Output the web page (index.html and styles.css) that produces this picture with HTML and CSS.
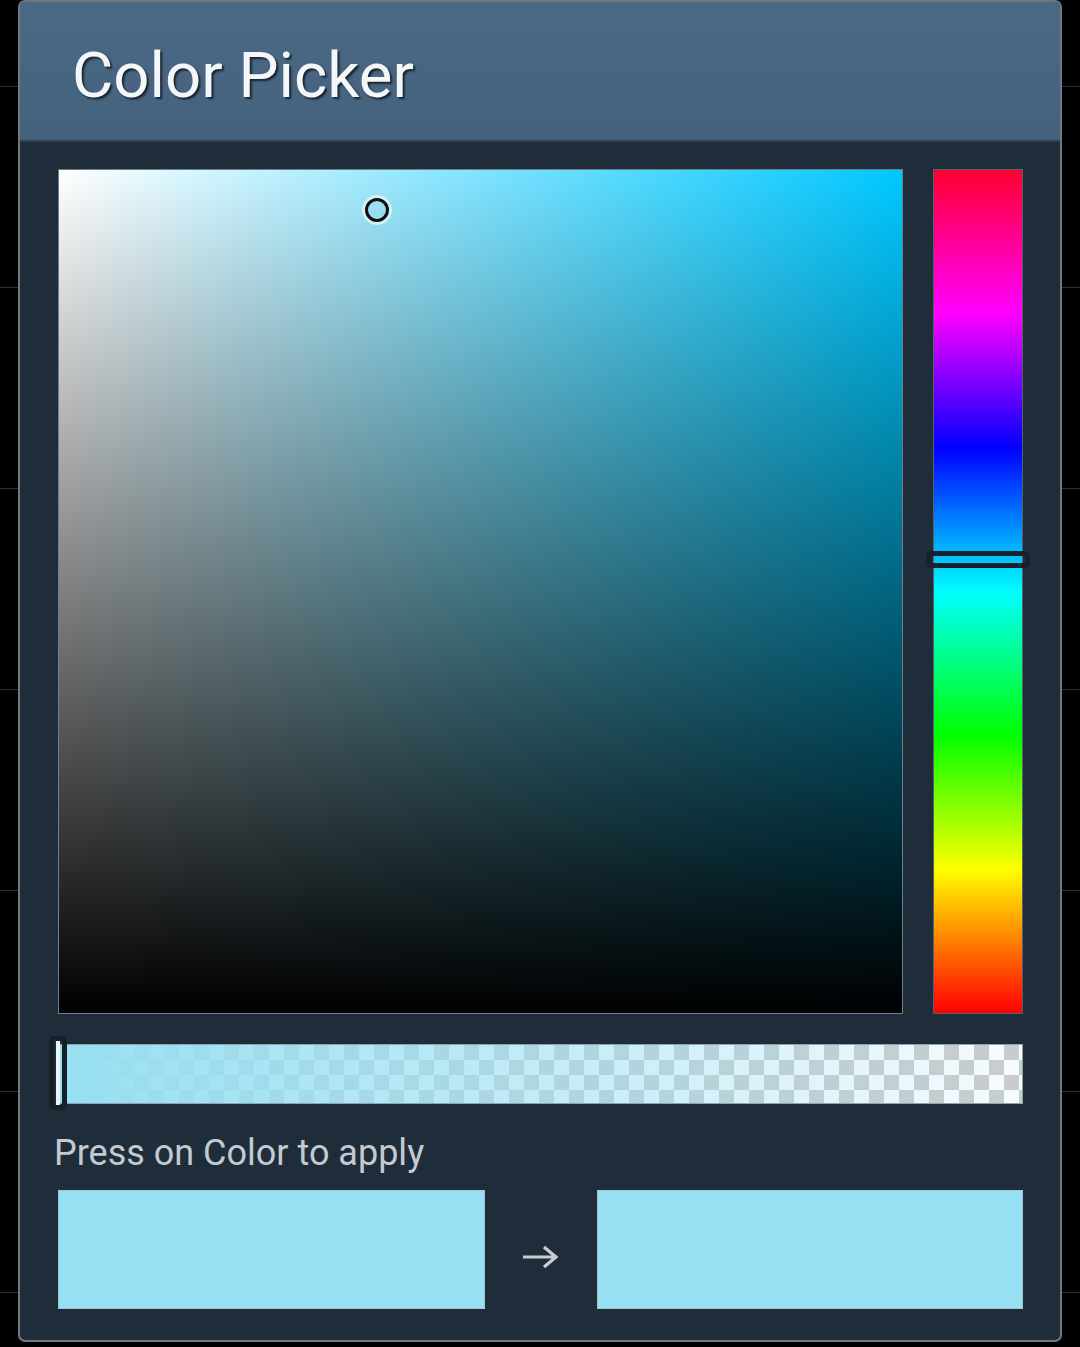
FILE: index.html
```html
<!DOCTYPE html>
<html lang="en">
<head>
    <meta charset="UTF-8">
    <meta name="viewport" content="width=device-width, initial-scale=1.0">
    <title>Color Picker</title>
    <link rel="stylesheet" href="styles.css">
</head>
<body>
    <!-- settings list behind the dialog -->
    <div class="backdrop">
        <div class="backdrop-row first"></div>
        <div class="backdrop-row"></div>
        <div class="backdrop-row"></div>
        <div class="backdrop-row"></div>
        <div class="backdrop-row"></div>
        <div class="backdrop-row"></div>
        <div class="backdrop-row"></div>
    </div>

    <div class="dialog">
        <div class="dialog-header">
            <h1 class="dialog-title">Color Picker</h1>
        </div>

        <div class="dialog-body">
            <div class="picker-row">
                <div class="sv-square">
                    <div class="sv-cursor"></div>
                </div>
                <div class="hue-bar">
                    <div class="hue-handle"></div>
                </div>
            </div>

            <div class="alpha-bar">
                <div class="alpha-handle"></div>
            </div>

            <div class="hint">Press on Color to apply</div>

            <div class="swatches">
                <div class="swatch"></div>
                <div class="swatch-arrow">
                    <svg width="38" height="26" viewBox="0 0 38 26">
                        <path d="M2 13 H34 M23 3 L35 13 L23 23" fill="none" stroke="#c9ced3" stroke-width="3.2" stroke-linejoin="miter"/>
                    </svg>
                </div>
                <div class="swatch"></div>
            </div>
        </div>
    </div>
</body>
</html>
```

FILE: styles.css
```css
body {
    margin: 0;
    padding: 0;
    background: #000;
    width: 1080px;
    height: 1347px;
    overflow: hidden;
    position: relative;
    font-family: Roboto, 'Noto Sans', sans-serif;
}

.backdrop {
    display: flex;
    flex-direction: column;
}

.backdrop-row {
    height: 200px;
    border-bottom: 1px solid #2b2f33;
}

.backdrop-row.first {
    height: 86px;
}

/* Dialog */
.dialog {
    position: absolute;
    left: 18px;
    top: 0;
    width: 1044px;
    height: 1342px;
    box-sizing: border-box;
    border: 2px solid #6f7882;
    border-radius: 7px;
    background-color: #1f2d3b;
    overflow: hidden;
    display: flex;
    flex-direction: column;
}

.dialog-header {
    height: 140px;
    box-sizing: border-box;
    padding: 42px 0 0 52px;
    background: linear-gradient(to bottom, #4a6984, #45627d);
    border-bottom: 2px solid #2f4457;
}

.dialog-title {
    margin: 0;
    font-size: 63.5px;
    line-height: 63.5px;
    font-weight: normal;
    color: #f3f7fa;
    text-shadow: 2px 2px 2px rgba(0, 0, 0, 0.65);
}

.dialog-body {
    padding: 27px 37px 0 38px;
    display: flex;
    flex-direction: column;
}

.picker-row {
    display: grid;
    grid-template-columns: 845px 90px;
    gap: 30px;
}

.sv-square {
    height: 845px;
    box-sizing: border-box;
    border: 1px solid #6f7f8c;
    position: relative;
    background:
        linear-gradient(to bottom, rgba(0, 0, 0, 0), #000),
        linear-gradient(to right, #fff, rgba(255, 255, 255, 0)),
        #00c8ff;
}

.sv-cursor {
    position: absolute;
    left: 306px;
    top: 28px;
    width: 18px;
    height: 18px;
    border: 3px solid #111;
    border-radius: 50%;
    box-shadow: 0 0 0 3px rgba(235, 245, 248, 0.75);
}

.hue-bar {
    height: 845px;
    box-sizing: border-box;
    border: 1px solid #55606a;
    position: relative;
    background: linear-gradient(to bottom, #ff0030, #ff00ff 17%, #0000ff 33%, #00ffff 50%, #00ff00 67%, #ffff00 83%, #ff0000);
}

.hue-handle {
    position: absolute;
    left: -8px;
    right: -8px;
    top: 381px;
    height: 7px;
    border: 5px solid #15222c;
    border-radius: 5px;
}

.alpha-bar {
    margin-top: 30px;
    height: 60px;
    box-sizing: border-box;
    border: 1px solid #8aa3b0;
    position: relative;
    background:
        linear-gradient(to right, rgba(151, 223, 242, 1) 0%, rgba(151, 223, 242, 0.6) 45%, rgba(151, 223, 242, 0) 100%),
        repeating-conic-gradient(#c9cccd 0 25%, #f7fbfd 0 50%) 0 0 / 30px 30px;
}

.alpha-handle {
    position: absolute;
    left: -10px;
    top: -9px;
    width: 8px;
    height: 64px;
    border: 5px solid #141f27;
    border-radius: 5px;
    background: linear-gradient(to right, transparent 0 30%, #e8f4f8 30% 70%, transparent 70%);
}

.hint {
    margin-top: 29px;
    font-size: 36px;
    line-height: 40px;
    color: #c3cad0;
    margin-left: -4px;
}

.swatches {
    margin-top: 17px;
    display: grid;
    grid-template-columns: 427px 1fr 426px;
    height: 119px;
}

.swatch {
    background-color: #97dff2;
    border: 1px solid #a7c4cf;
}

.swatch-arrow {
    display: flex;
    align-items: center;
    justify-content: center;
    padding-top: 14px;
    padding-right: 2px;
}
```
